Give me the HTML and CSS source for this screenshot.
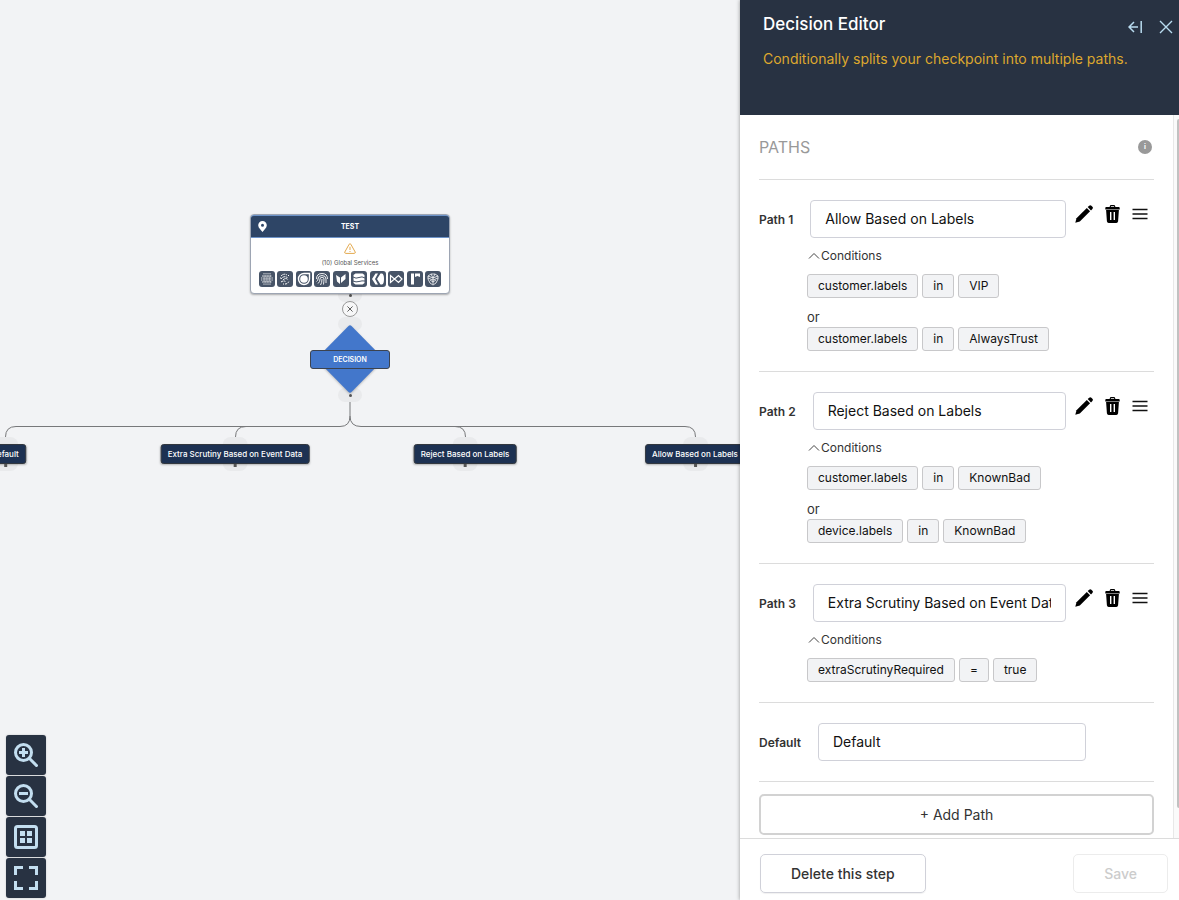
FILE: index.html
```html
<!DOCTYPE html>
<html lang="en">
<head>
    <meta charset="UTF-8">
    <meta name="viewport" content="width=device-width, initial-scale=1.0">
    <title>Decision Editor</title>
    <link rel="stylesheet" href="styles.css">
</head>
<body>
    <!-- Shared icons -->
    <svg class="sprite" aria-hidden="true">
        <symbol id="pencil" viewBox="0 0 18 18">
            <path d="M0.3 17.8l1.2-4.6L11.8 3l3.3 3.3L4.8 16.5z"/>
            <path d="M12.7 2.1l1.5-1.4a1.6 1.6 0 0 1 2.2 0l1 1a1.6 1.6 0 0 1 0 2.2L16 5.4z"/>
        </symbol>
        <symbol id="trash" viewBox="0 0 16 18">
            <path fill-rule="evenodd" d="M4.7 2V1.4Q4.9 0 6.3 0h2.4q1.4 0 1.6 1.4V2h3.5q.9 0 .9 1v1.6H.3V3q0-1 .9-1zM5.9 2h3.2v-.8H5.9z"/>
            <path fill-rule="evenodd" d="M1.1 5h12.8l-.8 11.2q-.2 1.8-1.8 1.8H3.7q-1.6 0-1.8-1.8zM5 7v8h1.400V7zM8.600 7v8H10V7z"/>
        </symbol>
        <symbol id="bars" viewBox="0 0 16 12">
            <path d="M0.5 1.5h15M0.5 6h15M0.5 10.5h15" fill="none" stroke="#111" stroke-width="1.4"/>
        </symbol>
        <symbol id="caret" viewBox="0 0 12 8">
            <path d="M1 6.5l5-5 5 5" fill="none" stroke="#444" stroke-width="1"/>
        </symbol>
    </svg>

    <div class="app">
        <main class="canvas">
            <svg class="edges" width="800" height="480" aria-hidden="true">
                <path d="M350 401V416Q350 426.500 340 426.500H16Q5.500 426.500 5.500 437V445"/>
                <path d="M340 426.500H246Q235.500 426.500 235.500 437V445"/>
                <path d="M350 416Q350 426.500 361 426.500H455Q465.500 426.500 465.500 437V445"/>
                <path d="M455 426.500H685Q695.500 426.500 695.500 437V445"/>
            </svg>

            <div class="handle handle-checkpoint"></div>
            <div class="handle handle-decision-in"></div>
            <div class="handle handle-decision-out"></div>

            <section class="node checkpoint">
                <header class="checkpoint-head">
                    <svg width="9" height="11" viewBox="0 0 9 11"><path fill="#fff" fill-rule="evenodd" d="M4.500 0A4.300 4.300 0 0 1 8.800 4.300C8.800 7 6 9 4.500 11 3 9 .2 7 .2 4.300A4.300 4.300 0 0 1 4.500 0zM4.500 2.800a1.500 1.500 0 1 0 0 3 1.500 1.500 0 0 0 0-3z"/></svg>
                    <span>TEST</span>
                </header>
                <div class="checkpoint-body">
                    <svg width="12" height="11" viewBox="0 0 12 11" fill="none" stroke="#e3a94f"><path d="M5.200 1.200Q6 0 6.800 1.200L11.200 9Q11.600 10.300 10.400 10.400H1.600Q.4 10.300.8 9zM6 3.800v3.200M6 8v1"/></svg>
                    <p>(10) Global Services</p>
                    <div class="services">
                        <svg viewBox="0 0 16 16"><path d="M5 2v12M7 2v12M9 2v12M11 2v12M3 5h10M2 7h12M2 9h12M3 11h10" stroke-width=".8" stroke-dasharray="1 .6"/></svg>
                        <svg viewBox="0 0 16 16"><path d="M4 5q3-3 6-1M4 8q3-4 7-1M6 9q3-3 5 0M4 11q3-2 5 0M8 13q3 0 4-3M11 4l1 1M3 7h1M6 13h1" stroke-width="1" stroke-dasharray="2 .7"/></svg>
                        <svg viewBox="0 0 16 16"><path d="M8 2.500h5.500V8A5.500 5.500 0 1 1 8 2.500z" stroke-width="1.400"/><circle class="solid" cx="8" cy="8" r="3.800"/></svg>
                        <svg viewBox="0 0 16 16"><path d="M2.500 8q0-5.500 5.500-5.500T13.500 8M2.500 10.500Q4 9.500 4 8q0-3.500 4-3.500T12 8v4M4 12.500Q6 11 6 8q0-1.700 2-1.700T10 8t-.5 5.500M6.500 14Q8 12 8 8" stroke-width=".9"/></svg>
                        <svg viewBox="0 0 16 16"><path class="solid" d="M3 4l4 2.500V13L4 10.500zM8 6.500L12.500 3v5L8 12z"/></svg>
                        <svg viewBox="0 0 16 16"><path class="solid" d="M4.500 2.500h7L13.500 4v8l-2 1.500h-7L2.500 12V4z"/><path class="cut" d="M2 6q3 2 6 .5t6 .5M2 10q3 1.500 6 .5t6-.5"/></svg>
                        <svg viewBox="0 0 16 16"><path class="solid" d="M5.500 2.500H8L5 8l3 5.500H5.500L2 8zM10.500 2.500H12Q14 3 14 8t-2 5.500h-1.500L7 8z"/></svg>
                        <svg viewBox="0 0 16 16"><path d="M2.500 4.500v7l4-3.500zM6.500 8L10.500 4.500 14 8l-3.500 3.500z" stroke-width="1.200"/></svg>
                        <svg viewBox="0 0 16 16"><path class="solid" d="M4 2.500h3v11H4zM8 2.500h5V6L10.500 5 8 6z"/></svg>
                        <svg viewBox="0 0 16 16"><path d="M3 5l3-2h4l3 2v3l-2 4-3 2-3-2-2-4zM3 7l5 2 5-2M6 3l2 4 2-4M5 9l3 2 3-2M8 7v6M3 5l5 2 5-2" stroke-width=".8"/></svg>
                    </div>
                </div>
            </section>

            <button class="remove" type="button" aria-label="Remove step">
                <svg width="6" height="6" viewBox="0 0 7 7"><path d="M.5.5l6 6M6.500.5l-6 6" stroke="#444" stroke-width="1"/></svg>
            </button>

            <div class="node decision">
                <svg class="diamond" width="80" height="70" viewBox="0 0 80 70"><path d="M38.500 2Q40 .5 41.500 2L74 35 41.500 68Q40 69.500 38.500 68L6 35z" fill="#4377cb"/></svg>
                <span class="decision-label">DECISION</span>
            </div>

            <div class="node outcome outcome-default"><span>Default</span></div>
            <div class="node outcome outcome-scrutiny"><span>Extra Scrutiny Based on Event Data</span></div>
            <div class="node outcome outcome-reject"><span>Reject Based on Labels</span></div>
            <div class="node outcome outcome-allow"><span>Allow Based on Labels</span></div>

            <div class="controls">
                <button type="button" aria-label="Zoom in">
                    <svg viewBox="0 0 24 24"><circle cx="9.500" cy="9.500" r="8"/><path d="M15.500 15.500l8 8"/><path d="M9.500 5v9M5 9.500h9"/></svg>
                </button>
                <button type="button" aria-label="Zoom out">
                    <svg viewBox="0 0 24 24"><circle cx="9.500" cy="9.500" r="8"/><path d="M15.500 15.500l8 8"/><path d="M5 9.500h9"/></svg>
                </button>
                <button type="button" aria-label="Fit view">
                    <svg viewBox="0 0 24 24"><rect x="1.500" y="1.500" width="21" height="21" rx="2"/><path d="M6 8.500h5M13 8.500h5M6 15.500h5M13 15.500h5" stroke-width="5"/></svg>
                </button>
                <button type="button" aria-label="Full screen">
                    <svg viewBox="0 0 24 24"><path d="M1.500 9V1.500H9M15 1.500h7.500V9M22.500 15v7.500H15M9 22.500H1.500V15"/></svg>
                </button>
            </div>
        </main>

        <aside class="panel">
            <header class="panel-head">
                <div>
                    <h1>Decision Editor</h1>
                    <p>Conditionally splits your checkpoint into multiple paths.</p>
                </div>
                <div class="panel-actions">
                    <button type="button" aria-label="Expand panel">
                        <svg width="14" height="14" viewBox="0 0 14 14"><path d="M13.200 1v12M10 7H1M6 2L1 7l5 5" fill="none" stroke="#b9dcf0" stroke-width="1.500"/></svg>
                    </button>
                    <button type="button" aria-label="Close">
                        <svg width="14" height="14" viewBox="0 0 14 14"><path d="M1 1l12 12M13 1L1 13" fill="none" stroke="#b9dcf0" stroke-width="1.400"/></svg>
                    </button>
                </div>
            </header>

            <div class="panel-body">
                <div class="paths">
                    <div class="paths-head">
                        <h2>PATHS</h2>
                        <span class="info">i</span>
                    </div>

                    <section class="path">
                        <div class="path-row">
                            <label for="path1">Path 1</label>
                            <input id="path1" type="text" value="Allow Based on Labels">
                            <div class="path-actions">
                                <button type="button" aria-label="Edit"><svg width="18" height="18"><use href="#pencil"/></svg></button>
                                <button type="button" aria-label="Delete"><svg width="16" height="18"><use href="#trash"/></svg></button>
                                <button type="button" aria-label="Reorder"><svg width="16" height="12"><use href="#bars"/></svg></button>
                            </div>
                        </div>
                        <div class="conditions">
                            <button class="toggle" type="button"><svg width="12" height="8"><use href="#caret"/></svg>Conditions</button>
                            <div class="chips"><span>customer.labels</span><span>in</span><span>VIP</span></div>
                            <p>or</p>
                            <div class="chips"><span>customer.labels</span><span>in</span><span>AlwaysTrust</span></div>
                        </div>
                    </section>

                    <section class="path">
                        <div class="path-row">
                            <label for="path2">Path 2</label>
                            <input id="path2" type="text" value="Reject Based on Labels">
                            <div class="path-actions">
                                <button type="button" aria-label="Edit"><svg width="18" height="18"><use href="#pencil"/></svg></button>
                                <button type="button" aria-label="Delete"><svg width="16" height="18"><use href="#trash"/></svg></button>
                                <button type="button" aria-label="Reorder"><svg width="16" height="12"><use href="#bars"/></svg></button>
                            </div>
                        </div>
                        <div class="conditions">
                            <button class="toggle" type="button"><svg width="12" height="8"><use href="#caret"/></svg>Conditions</button>
                            <div class="chips"><span>customer.labels</span><span>in</span><span>KnownBad</span></div>
                            <p>or</p>
                            <div class="chips"><span>device.labels</span><span>in</span><span>KnownBad</span></div>
                        </div>
                    </section>

                    <section class="path">
                        <div class="path-row">
                            <label for="path3">Path 3</label>
                            <input id="path3" type="text" value="Extra Scrutiny Based on Event Data">
                            <div class="path-actions">
                                <button type="button" aria-label="Edit"><svg width="18" height="18"><use href="#pencil"/></svg></button>
                                <button type="button" aria-label="Delete"><svg width="16" height="18"><use href="#trash"/></svg></button>
                                <button type="button" aria-label="Reorder"><svg width="16" height="12"><use href="#bars"/></svg></button>
                            </div>
                        </div>
                        <div class="conditions">
                            <button class="toggle" type="button"><svg width="12" height="8"><use href="#caret"/></svg>Conditions</button>
                            <div class="chips"><span>extraScrutinyRequired</span><span>=</span><span>true</span></div>
                        </div>
                    </section>

                    <section class="path path-default">
                        <div class="path-row">
                            <label for="pathDefault">Default</label>
                            <input id="pathDefault" type="text" value="Default">
                        </div>
                    </section>

                    <div class="add">
                        <button type="button">+ Add Path</button>
                    </div>
                </div>
                <div class="scrollbar"><div class="thumb"></div></div>
            </div>

            <footer class="panel-foot">
                <button class="delete" type="button">Delete this step</button>
                <button class="save" type="button" disabled>Save</button>
            </footer>
        </aside>
    </div>
</body>
</html>
```
FILE: styles.css
```css
* {
    box-sizing: border-box;
}

body {
    margin: 0;
    font-family: Inter, "Liberation Sans", sans-serif;
    color: #333;
}

h1, h2, p {
    margin: 0;
}

button {
    font-family: inherit;
    padding: 0;
    border: none;
    background: none;
    cursor: pointer;
}

button svg {
    display: block;
}

.sprite {
    display: none;
}

.app {
    display: flex;
    height: 100vh;
    overflow: hidden;
}

/* Flow canvas */
.canvas {
    flex: 1;
    min-width: 0;
    position: relative;
    overflow: hidden;
    background: #f2f3f5;
}

.edges {
    position: absolute;
    top: 0;
    left: 0;
    fill: none;
    stroke: #77787a;
}

.node, .handle, .remove {
    position: absolute;
    transform: translateX(-50%);
}

.handle {
    left: 350px;
    width: 24px;
    height: 14px;
    border-radius: 7px;
    background: #e9eaec;
}

.handle-checkpoint {
    top: 288px;
}

.handle-decision-in {
    top: 317px;
}

.handle-decision-out {
    top: 388px;
}

.handle-checkpoint::after, .handle-decision-out::after {
    content: "";
    position: absolute;
    left: 11px;
    top: 6px;
    width: 3px;
    height: 3px;
    border-radius: 50%;
    background: #555;
}

.checkpoint {
    left: 350px;
    top: 214px;
    width: 200px;
    border: 1px solid #9da5b3;
    border-radius: 4px;
    background: #fff;
    box-shadow: 0 1px 2px rgba(0, 0, 0, 0.3);
}

.checkpoint-head {
    display: grid;
    grid-template-columns: 9px 1fr 9px;
    align-items: center;
    height: 23px;
    padding: 0 7px;
    border-top: 1px solid #6d93c9;
    border-bottom: 1px solid #6d93c9;
    border-radius: 3px 3px 0 0;
    background: #2e4566;
    color: #fff;
    font-size: 7px;
    font-weight: 700;
    text-align: center;
}

.checkpoint-body {
    display: flex;
    flex-direction: column;
    align-items: center;
    padding: 5px 8px 6px;
}

.checkpoint-body p {
    margin: 4px 0 3px;
    font-size: 6px;
    line-height: 10px;
    color: #555;
}

.services {
    display: flex;
    justify-content: space-between;
    width: 100%;
}

.services svg {
    width: 16px;
    height: 16px;
    border-radius: 3px;
    background: #475467;
    fill: none;
    stroke: #fff;
    stroke-width: 2;
}

.services .solid {
    fill: #fff;
    stroke: none;
}

.services .cut {
    stroke: #475467;
    stroke-width: 1;
}

.remove {
    left: 350px;
    top: 301px;
    display: flex;
    align-items: center;
    justify-content: center;
    width: 16px;
    height: 16px;
    border: 1px solid #999;
    border-radius: 50%;
    background: #f7f7f8;
}

.decision {
    left: 350px;
    top: 324px;
    display: grid;
    place-items: center;
}

.decision > * {
    grid-area: 1 / 1;
}

.diamond {
    filter: drop-shadow(0 1px 1px rgba(0, 0, 0, 0.25));
}

.decision-label {
    z-index: 1;
    width: 80px;
    border: 1px solid #3c434f;
    border-radius: 3px;
    background: #4377cb;
    color: #fff;
    font-size: 7px;
    font-weight: 600;
    line-height: 17px;
    text-align: center;
}

.outcome {
    top: 444px;
}

.outcome span {
    position: relative;
    display: block;
    padding: 0 6px;
    border: 1px solid #33383f;
    border-radius: 3px;
    background: #1d3152;
    box-shadow: 0 1px 2px rgba(0, 0, 0, 0.25);
    color: #fff;
    font-size: 8px;
    font-weight: 500;
    line-height: 18px;
    white-space: nowrap;
}

.outcome::before {
    content: "";
    position: absolute;
    top: -7px;
    left: calc(50% - 12px);
    width: 25px;
    height: 34px;
    border-radius: 8px;
    background: #e9eaec;
    z-index: -1;
}

.outcome::after {
    content: "";
    position: absolute;
    bottom: -3px;
    left: calc(50% - 1px);
    width: 3px;
    height: 3px;
    background: #555;
}

.outcome-default {
    left: 5px;
}

.outcome-scrutiny {
    left: 235px;
}

.outcome-reject {
    left: 465px;
}

.outcome-allow {
    left: 695px;
}

.controls {
    position: absolute;
    left: 6px;
    bottom: 2px;
    display: flex;
    flex-direction: column;
    gap: 1px;
}

.controls button {
    display: flex;
    align-items: center;
    justify-content: center;
    width: 40px;
    height: 40px;
    border-radius: 3px;
    background: #283242;
    box-shadow: 0 0 2px rgba(0, 0, 0, 0.2);
}

.controls svg {
    width: 24px;
    height: 24px;
    fill: none;
    stroke: #c3def0;
    stroke-width: 3;
}

/* Editor panel */
.panel {
    z-index: 1;
    display: flex;
    flex-direction: column;
    width: 439px;
    background: #fff;
    box-shadow: 0 0 4px rgba(0, 0, 0, 0.4);
}

.panel-head {
    display: flex;
    justify-content: space-between;
    min-height: 115px;
    padding: 12px 6px 0 23px;
    background: #283242;
}

.panel-head h1 {
    color: #fff;
    font-size: 17px;
    font-weight: 500;
    line-height: 24px;
}

.panel-head p {
    margin-top: 13px;
    color: #dea82e;
    font-size: 14px;
    line-height: 20px;
    white-space: nowrap;
}

.panel-actions {
    display: flex;
    align-items: center;
    gap: 17px;
    height: 30px;
}

.panel-body {
    display: flex;
    flex: 1;
    min-height: 0;
    overflow: hidden;
}

.paths {
    flex: 1;
    min-width: 0;
    padding: 0 19px;
}

.paths-head {
    display: flex;
    align-items: center;
    justify-content: space-between;
    height: 64px;
    padding-right: 2px;
}

.paths-head h2 {
    color: #999;
    font-size: 16px;
    font-weight: 400;
}

.info {
    width: 14px;
    height: 14px;
    border-radius: 50%;
    background: #999;
    color: #fff;
    font-size: 7px;
    font-weight: 700;
    line-height: 14px;
    text-align: center;
}

.path {
    padding: 20px 0;
    border-top: 1px solid #dcdcdc;
}

.path-row {
    display: flex;
    align-items: flex-start;
}

.path-row label {
    margin-right: 17px;
    font-size: 12px;
    font-weight: 600;
    line-height: 40px;
    height: 38px;
}

.path-row input {
    flex: 1;
    min-width: 0;
    height: 38px;
    padding: 0 14px 2px;
    border: 1px solid #d0d1d9;
    border-radius: 4px;
    background: #fff;
    color: #111;
    font-family: inherit;
    font-size: 14px;
}

.path-default input {
    margin-right: 68px;
}

.path-actions {
    display: flex;
    align-items: center;
    justify-content: space-between;
    width: 88px;
    height: 28px;
    padding: 0 6px 0 9px;
}

.conditions {
    padding-left: 48px;
    font-size: 13px;
}

.toggle {
    display: flex;
    align-items: center;
    gap: 1px;
    margin: 8px 0;
    padding-left: 1px;
    color: #333;
    font-size: 12px;
    line-height: 20px;
}

.conditions p {
    margin-top: 9px;
    line-height: 20px;
}

.chips {
    display: flex;
    gap: 4px;
}

.chips span {
    padding: 0 10px;
    border: 1px solid #c8c8ca;
    border-radius: 3px;
    background: #f2f3f5;
    color: #111;
    font-size: 12px;
    line-height: 22px;
}

.add {
    padding-top: 12px;
    border-top: 1px solid #dcdcdc;
}

.add button {
    width: 100%;
    height: 41px;
    border: 2px solid #d2d2d2;
    border-radius: 5px;
    color: #333;
    font-size: 14px;
}

.scrollbar {
    width: 6px;
    padding: 4px 0 30px 3px;
    border-left: 1px solid #e8e8e8;
    background: #fafafa;
}

.thumb {
    height: 100%;
    border-radius: 3px 0 0 3px;
    background: #c1c1c1;
}

.panel-foot {
    display: flex;
    justify-content: space-between;
    padding: 15px 11px 7px 20px;
    border-top: 1px solid #dcdcdc;
}

.panel-foot button {
    height: 39px;
    padding: 0 30px;
    border: 1px solid #d0d1d9;
    border-radius: 5px;
    box-shadow: 0 1px 1px rgba(0, 0, 0, 0.06);
    color: #333;
    font-size: 14px;
    font-weight: 500;
}

.panel-foot .save {
    border-color: #ececec;
    box-shadow: none;
    color: #ccc;
}
```
